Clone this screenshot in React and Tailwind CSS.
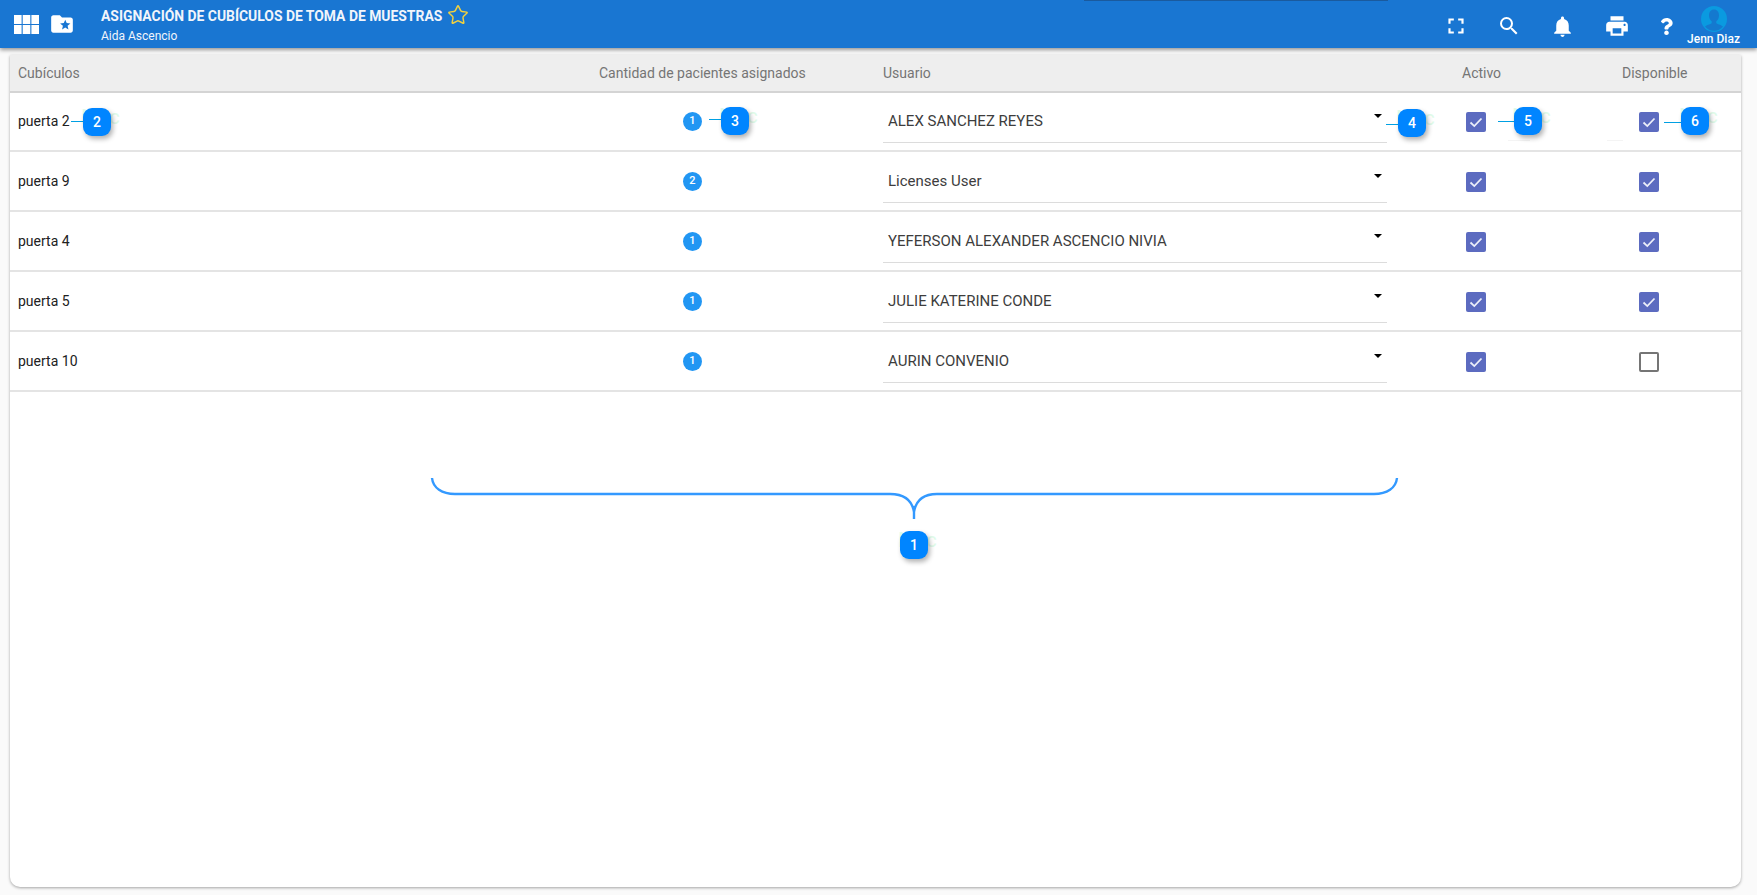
import { Star } from 'lucide-react'
import { MdFullscreen, MdSearch, MdNotifications, MdPrint, MdFolderSpecial } from 'react-icons/md'
import { FaQuestion } from 'react-icons/fa'

const rows = [
  { name: 'puerta 2', count: 1, user: 'ALEX SANCHEZ REYES', activo: true, disponible: true },
  { name: 'puerta 9', count: 2, user: 'Licenses User', activo: true, disponible: true },
  { name: 'puerta 4', count: 1, user: 'YEFERSON ALEXANDER ASCENCIO NIVIA', activo: true, disponible: true },
  { name: 'puerta 5', count: 1, user: 'JULIE KATERINE CONDE', activo: true, disponible: true },
  { name: 'puerta 10', count: 1, user: 'AURIN CONVENIO', activo: true, disponible: false },
]

const gridCols = 'grid grid-cols-[499px_368px_510px_174px_180px]'

function Check({ on }) {
  if (!on) {
    return <span className="block w-5 h-5 rounded-[2px] border-2 border-[#757575] bg-white" />
  }
  return (
    <span className="flex items-center justify-center w-5 h-5 rounded-[2px] bg-[#5c6bc0]">
      <svg viewBox="0 0 20 20" className="w-5 h-5" fill="none" stroke="#eceef9" strokeWidth="1.8">
        <path d="M4.5 10.5l3.8 3.6L15.5 6.5" />
      </svg>
    </span>
  )
}

// numbered blue marker with its leader line
function Marker({ n, className, line }) {
  return (
    <div className={'absolute ' + className}>
      <span className="absolute left-[-2px] top-[-1px] text-[20px] leading-[20px] text-[#e0fbea]">Mac</span>
      {line}
      <div className="relative flex items-center justify-center w-7 h-7 rounded-[9px] bg-[#0085ff] text-white text-sm font-medium shadow-[2px_3px_5px_rgba(0,0,0,0.3)]">
        {n}
      </div>
    </div>
  )
}

function Leader({ className }) {
  return <div className={'absolute h-px bg-[#00a0e3] ' + className} />
}

function Header() {
  return (
    <header className="relative flex items-center h-12 bg-[#1976d2] text-white shadow-[0_2px_4px_rgba(0,0,0,0.4)] z-10">
      <div className="absolute top-0 left-[1084px] w-[304px] h-px bg-[#1a5a9e]" />
      <svg viewBox="0 0 25 19" className="ml-[14px] w-[25px] h-[19px]" fill="#fff">
        <rect x="0" y="0" width="7.6" height="9" />
        <rect x="8.7" y="0" width="7.6" height="9" />
        <rect x="17.4" y="0" width="7.6" height="9" />
        <rect x="0" y="10" width="7.6" height="9" />
        <rect x="8.7" y="10" width="7.6" height="9" />
        <rect x="17.4" y="10" width="7.6" height="9" />
      </svg>
      <MdFolderSpecial className="ml-[10px] w-[26px] h-[26px]" />
      <div className="ml-[26px] flex flex-col">
        <div className="flex items-center gap-[5px] h-[20px] mt-[2px]">
          <span className="text-[13.9px] font-bold text-[#f1f5fb]">ASIGNACIÓN DE CUBÍCULOS DE TOMA DE MUESTRAS</span>
          <Star className="w-[22px] h-[22px] text-[#f3d13e] mt-[-3px]" strokeWidth={1.6} />
        </div>
        <span className="text-xs leading-[16px] text-[#f1f5fb] mt-[1px]">Aida Ascencio</span>
      </div>
      <div className="ml-auto relative h-full w-[300px]">
        <MdFullscreen className="absolute left-[-14px] top-[13px] w-[26px] h-[26px]" />
        <MdSearch className="absolute left-[40px] top-[14px] w-[24px] h-[24px]" />
        <MdNotifications className="absolute left-[93px] top-[14px] w-[25px] h-[25px]" />
        <MdPrint className="absolute left-[147px] top-[13px] w-[26px] h-[26px]" />
        <FaQuestion className="absolute left-[203px] top-[18px] w-[13px] h-[17px]" />
        <svg viewBox="0 0 26 26" className="absolute left-[244px] top-[6px] w-[26px] h-[26px]">
          <circle cx="13" cy="13" r="13" fill="#0a9ae0" />
          <path d="M13 3.5c3.2 0 5 2.6 5 5.8 0 2.7-1.2 5-2.7 6v1.6c0 .8 4.5 1.7 6.7 3.6a11.5 11.5 0 0 1-18 0c2.2-1.9 6.7-2.8 6.7-3.6v-1.600c-1.500-1-2.700-3.300-2.700-6 0-3.200 1.800-5.800 5-5.800z" fill="#1479cf" />
        </svg>
        <span className="absolute left-[230px] top-[32px] w-[53px] text-xs leading-[14px] font-medium text-center whitespace-nowrap">Jenn Diaz</span>
      </div>
    </header>
  )
}

export default function App() {
  return (
    <div className="relative w-[1757px] h-[895px] overflow-hidden bg-[#fafafa] font-['Roboto',sans-serif]">
      <Header />

      <main className="relative mx-[10px] mt-[7px] w-[1731px] h-[832px] bg-white rounded-b-[10px] shadow-[0_1px_3px_rgba(0,0,0,0.35)]">
        {/* Table head */}
        <div className={gridCols + ' h-[38px] items-center bg-[#eeeeee] border-b-2 border-[#d4d4d4] text-sm text-[#757575]'}>
          <div className="pl-2">Cubículos</div>
          <div className="pl-[90px]">Cantidad de pacientes asignados</div>
          <div className="pl-[6px]">Usuario</div>
          <div className="pl-[75px]">Activo</div>
          <div className="pl-[61px]">Disponible</div>
        </div>

        {/* Rows */}
        <div className="-mt-px">
          {rows.map(row => (
            <div key={row.name} className={gridCols + ' h-[60px] border-b-2 border-[#e4e4e4] text-sm text-[#212121]'}>
              <div className="pl-2 flex items-center">{row.name}</div>
              <div className="pl-[174px] flex items-center">
                <span className="flex items-center justify-center w-[19px] h-[19px] rounded-full bg-[#2196f3] text-white text-[11px] font-medium">{row.count}</span>
              </div>
              <div className="pl-[6px]">
                <div className="relative w-[504px] h-[51px] border-b border-[#dcdcdc] flex items-center pl-[5px] pt-[9px] text-[15px] text-[#3d3d3d]">
                  {row.user}
                  <span className="absolute right-[5px] top-[22px] border-x-[4px] border-x-transparent border-t-[4px] border-t-black" />
                </div>
              </div>
              <div className="pl-[79px] pt-[2px] flex items-center"><Check on={row.activo} /></div>
              <div className="pl-[78px] pt-[2px] flex items-center"><Check on={row.disponible} /></div>
            </div>
          ))}
        </div>

        {/* Bracket */}
        <svg className="absolute left-[420px] top-[415px]" width="985" height="52" viewBox="0 0 985 52" fill="none" stroke="#3399ff" strokeWidth="2.4">
          <path d="M2 8c1 10 10 16 23 16H460c14 0 22 6 24 18M967 8c-1 10-10 16-23 16H507c-14 0-21 6-23 18M484 36V49" />
        </svg>

        <div className="absolute left-[1498px] top-[85px] w-[22px] h-px bg-[#f4f4f4]" />
        <div className="absolute left-[1597px] top-[85px] w-[16px] h-px bg-[#f4f4f4]" />

        <Marker n="2" className="left-[73px] top-[53px]" line={<Leader className="left-[-12px] top-[13px] w-[14px]" />} />
        <Marker n="3" className="left-[711px] top-[52px]" line={<Leader className="left-[-12px] top-[12px] w-[14px]" />} />
        <Marker n="4" className="left-[1388px] top-[54px]" line={<Leader className="left-[-12px] top-[15px] w-[14px]" />} />
        <Marker n="5" className="left-[1504px] top-[52px]" line={<Leader className="left-[-16px] top-[14px] w-[18px]" />} />
        <Marker n="6" className="left-[1671px] top-[52px]" line={<Leader className="left-[-17px] top-[15px] w-[19px]" />} />
        <Marker n="1" className="left-[890px] top-[476px]" />
      </main>
    </div>
  )
}
